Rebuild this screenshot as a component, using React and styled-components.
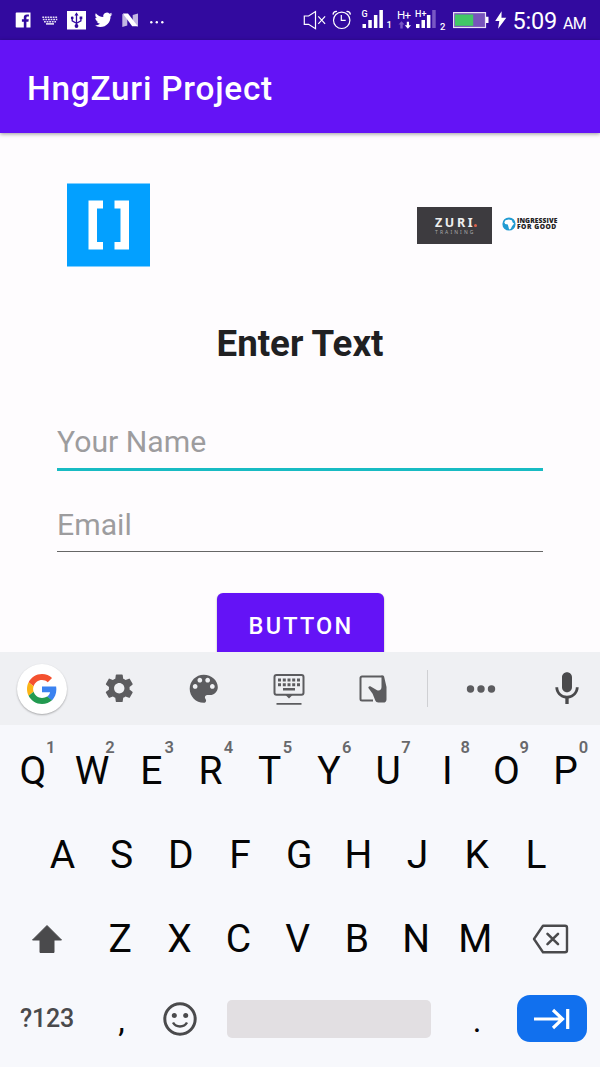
import React from 'react';
import styled, { createGlobalStyle } from 'styled-components';
import { MdSettings, MdMic } from 'react-icons/md';

const GlobalStyle = createGlobalStyle`
  *, *::before, *::after { box-sizing: border-box; }
  body { margin: 0; background: #fefcfe; font-family: Roboto, "Liberation Sans", sans-serif; }
  svg { display: block; flex: none; }
`;

const Screen = styled.div`
  width: 600px;
  height: 1067px;
  display: flex;
  flex-direction: column;
  overflow: hidden;
`;

/* ---------- status bar ---------- */

const StatusBar = styled.header`
  flex: none;
  height: 40px;
  display: flex;
  justify-content: space-between;
  background: #320a9f;
  color: #fff;
`;

const StatusClock = styled.div`
  display: flex;
  align-items: baseline;
  padding: 7px 14px 0 0;
  font-size: 23.5px;
  line-height: 28px;
  letter-spacing: -0.2px;
`;

const Meridiem = styled.span`
  margin-left: 6px;
  font-size: 16px;
  letter-spacing: -0.7px;
`;

const StatusGroup = styled.div`
  display: flex;
`;

const NotificationIcons = () => (
  <svg width="170" height="40" viewBox="0 0 170 40" fill="#fff">
    <path d="M16.5 12.5h14v15h-4.100v-5.700h2l.4-2.500h-2.400v-1.500c0-.8.3-1.200 1.300-1.200h1.200v-2.200h-1.900c-2.200 0-3.200 1.200-3.200 3.100v1.800h-1.900v2.500h1.900v5.700h-7.300a.8.8 0 0 1-.8-.8V13.300a.8.8 0 0 1 .8-.8z" />
    <g fill="none" stroke="#e4dcf6" strokeWidth="1.5" strokeDasharray="1.8 0.8">
      <path d="M42.300 17.200h15.500M42.800 19.500h14.500M44 21.700h12" />
    </g>
    <path d="M46 23.200h8v1.400h-8z" />
    <rect x="67" y="11" width="19" height="18.500" />
    <g stroke="#320a9f" strokeWidth="1.300" fill="none">
      <path d="M76.500 14v12M72.200 18v2.800l4.300 2.500 4.400-2.500V17.500" />
    </g>
    <g fill="#320a9f">
      <path d="M76.500 12.300l2 3.200h-4z" />
      <circle cx="76.500" cy="26" r="1.900" />
      <circle cx="72.200" cy="18" r="1.400" />
      <rect x="79.600" y="16.500" width="2.700" height="2.700" />
    </g>
    <path transform="translate(94.600 10.900) scale(.74)" d="M23.950 4.570a10 10 0 0 1-2.820.780 4.960 4.960 0 0 0 2.160-2.730c-.950.560-2 .960-3.130 1.190a4.920 4.920 0 0 0-8.380 4.480C7.690 8.100 4.070 6.130 1.640 3.160a4.820 4.820 0 0 0-.670 2.480c0 1.710.870 3.210 2.190 4.100a4.900 4.900 0 0 1-2.230-.620v.060a4.920 4.920 0 0 0 3.950 4.830 4.990 4.990 0 0 1-2.210.080 4.940 4.940 0 0 0 4.600 3.420A9.870 9.870 0 0 1 0 19.540a14 14 0 0 0 7.550 2.210c9.050 0 14-7.500 14-13.980 0-.210 0-.420-.020-.630a9.940 9.940 0 0 0 2.460-2.550z" />
    <path opacity=".7" d="M122.300 14l5 1.500v10l-5 1.500zM132.700 15l5.300-1.500v13l-5.300-1.500z" />
    <path d="M122.800 13.500h5.200l9.800 12.800h-5.600z" />
    <circle cx="151.300" cy="22.300" r="1.200" />
    <circle cx="156.800" cy="22.300" r="1.200" />
    <circle cx="162.300" cy="22.300" r="1.200" />
  </svg>
);

const SystemIcons = () => (
  <svg width="212" height="40" viewBox="300 0 212 40" fill="#fff">
    <g fill="none" stroke="#fff" strokeWidth="1.200">
      <path d="M304.300 16v8.300h4.300l6.900 4.400V11.500l-6.900 4.500zM318.300 16.300l6.800 7.600M325.100 16.300l-6.800 7.600" />
      <circle cx="341.700" cy="20.300" r="8.200" />
      <path d="M341.300 15v5.300h4.400M333 14.600c.2-2 2-3.300 4-3.100M350.400 14.600c-.2-2-2-3.300-4-3.100" />
    </g>
    <g fontFamily="Roboto, sans-serif" fontWeight="500">
      <text x="361.600" y="16.800" fontSize="9">G</text>
      <text x="386.600" y="28.200" fontSize="9.500">1</text>
      <text x="397" y="18.700" fontSize="11.500" fontWeight="400" textLength="14">H+</text>
      <text x="415" y="16.500" fontSize="9" textLength="11.500">H+</text>
      <text x="440" y="29.500" fontSize="9.500">2</text>
    </g>
    <path d="M362.500 24h3.500v4h-3.500zM368.300 20h3.500v8h-3.500zM373.900 15h3.500v13h-3.500zM379.400 10h3.500v18h-3.500z" />
    <path d="M416 24h3.500v4H416zM421.500 20h3.500v8h-3.500zM426.900 15h3.500v13h-3.500z" />
    <path fill="#7857c4" d="M432.200 10h3.500v18h-3.500zM400.300 28.500v-4h-1.800l3-3.200 3 3.200h-1.800v4z" />
    <path d="M406.800 21.800v3.400h-2l3.100 3.500 3.100-3.500h-2v-3.400z" />
    <rect x="453.600" y="12.600" width="31.900" height="14.900" fill="#7754bb" stroke="#e9e2f6" strokeWidth="1.200" />
    <path fill="#42c866" d="M455 14.500h18.200v11.300H455z" />
    <path d="M486 16.800h2.500V23H486zM501.600 11.200l-6.400 9.900h4.100l-1.200 7.600 8.200-11h-4.800z" />
  </svg>
);

/* ---------- app content ---------- */

const AppBar = styled.div`
  flex: none;
  height: 93px;
  padding: 1px 27px 0;
  display: flex;
  align-items: center;
  background: #6413f6;
  box-shadow: 0 1px 4px rgba(0, 0, 0, 0.4);
  z-index: 1;
`;

const Title = styled.h1`
  margin: 4px 0 0;
  color: #fff;
  font-size: 33.3px;
  font-weight: 500;
  line-height: 40px;
  letter-spacing: 0.8px;
  white-space: nowrap;
`;

const Content = styled.main`
  flex: none;
  height: 519px;
  padding: 50px 57px 0;
  display: flex;
  flex-direction: column;
  background: #fefcfe;
  overflow: hidden;
`;

const LogoRow = styled.div`
  flex: none;
  display: flex;
  align-items: center;
  height: 84px;
  margin: 0 -20px 0 10px;
`;

const ZuriBadge = styled.div`
  margin-left: auto;
  width: 75px;
  height: 37px;
  padding: 9px 0 0 18px;
  background: #3d3b3f;
  color: #eee;
  font-family: "Noto Sans", sans-serif;
`;

const ZuriName = styled.div`
  display: flex;
  align-items: baseline;
  font-size: 12.5px;
  font-weight: 700;
  line-height: 13px;
  letter-spacing: 2.6px;
`;

const ZuriDot = styled.span`
  width: 3px;
  height: 3px;
  margin-left: -1px;
  border-radius: 50%;
  background: #e0624a;
`;

const ZuriSub = styled.div`
  font-size: 5px;
  line-height: 6px;
  letter-spacing: 2.1px;
  color: #aaa;
`;

const Ingressive = styled.div`
  display: flex;
  align-items: center;
  gap: 1px;
  width: 61px;
  margin: 0 0 3px 10px;
  white-space: nowrap;
  font: 800 6.7px/5.700px "Open Sans", "Noto Sans", sans-serif;
  letter-spacing: 0.1px;
  color: #222;

  span { display: block; }
  span + span { letter-spacing: 0.5px; }
`;

const Heading = styled.h2`
  flex: none;
  margin: 55px 0 0;
  text-align: center;
  font-size: 36.700px;
  font-weight: 700;
  line-height: 44px;
  color: #202022;
`;

const Field = styled.input`
  flex: none;
  height: ${(p) => (p.$active ? 62 : 81)}px;
  margin-top: ${(p) => (p.$active ? 43 : 0)}px;
  padding: ${(p) => (p.$active ? '6px 0 0' : '27px 0 0')};
  border: 0;
  border-bottom: ${(p) => (p.$active ? '3px solid #18bbc3' : '1px solid #666')};
  border-radius: 0;
  outline: 0;
  background: transparent;
  font: 400 30.200px Roboto, sans-serif;
  &::placeholder { color: #9d9c9e; opacity: 1; }
`;

const Submit = styled.button`
  align-self: center;
  flex: none;
  margin-top: 41px;
  width: 167px;
  height: 66px;
  border: 0;
  border-radius: 6px;
  background: #6413f6;
  box-shadow: 0 1px 2px rgba(0, 0, 0, 0.35);
  color: #fff;
  font: 500 23.5px Roboto, sans-serif;
  letter-spacing: 2.2px;
  padding: 0 0 0 2px;
`;

/* ---------- keyboard ---------- */

const Keyboard = styled.section`
  flex: 1;
  display: flex;
  flex-direction: column;
  background: #f7f8fc;
  color: #050505;
`;

const Toolbar = styled.div`
  flex: none;
  height: 73px;
  display: flex;
  align-items: center;
  background: #eff0f3;
  color: #5c5c5f;
`;

const Tool = styled.div`
  flex: none;
  width: ${(p) => p.$w}px;
  display: flex;
  justify-content: center;
`;

const GoogleDisc = styled.div`
  width: 50px;
  height: 50px;
  margin-left: 7px;
  display: flex;
  align-items: center;
  justify-content: center;
  border-radius: 50%;
  background: #fff;
  box-shadow: 0 1px 2px rgba(0, 0, 0, 0.3);
`;

const Divider = styled.div`
  width: 1px;
  height: 37px;
  margin-left: 11px;
  background: #cfd0d3;
`;

const Keys = styled.div`
  padding-top: 3px;
`;

const KeyRow = styled.div`
  height: 84px;
  padding: 2px 1.500px 0 0;
  display: flex;
  justify-content: center;
  align-items: center;
`;

const Key = styled.div`
  position: relative;
  flex: none;
  width: ${(p) => p.$w || 59.2}px;
  display: flex;
  justify-content: center;
  font-size: 39px;
  line-height: 50px;
`;

const Hint = styled.sup`
  position: absolute;
  top: -8px;
  left: 42.500px;
  width: 10px;
  text-align: center;
  font-size: 16.500px;
  font-weight: 600;
  line-height: 20px;
  color: #68686b;
`;

const BottomRow = styled.div`
  height: 77px;
  display: flex;
  align-items: center;
`;

const Symbols = styled.div`
  width: 95px;
  padding-left: 20px;
  font-size: 25px;
  font-weight: 500;
  letter-spacing: -0.2px;
  color: #4a4a4c;
`;

const Punct = styled.div`
  width: ${(p) => p.$w}px;
  padding: 4px 0 0 ${(p) => p.$indent || 0}px;
  text-align: center;
  font-size: 33px;
  line-height: 40px;
`;

const Space = styled.div`
  width: 204px;
  height: 38px;
  margin-left: 15px;
  border-radius: 5px;
  background: #e2dfe2;
`;

const Next = styled.div`
  width: 70px;
  height: 47px;
  display: flex;
  align-items: center;
  justify-content: center;
  border-radius: 13px;
  background: #1170ee;
`;

const GoogleG = () => (
  <svg width="30" height="30" viewBox="0 0 48 48">
    <path fill="#f4512f" d="M24 9.500c3.540 0 6.710 1.220 9.210 3.600l6.850-6.850C35.900 2.380 30.470 0 24 0 14.620 0 6.510 5.380 2.560 13.220l7.980 6.190C12.430 13.720 17.740 9.500 24 9.500z" />
    <path fill="#3b82f0" d="M46.980 24.550c0-1.570-.150-3.090-.380-4.550H24v9.020h12.940c-.580 2.960-2.260 5.480-4.780 7.180l7.730 6c4.510-4.180 7.090-10.360 7.090-17.650z" />
    <path fill="#fbb416" d="M10.530 28.590c-.480-1.450-.760-2.990-.760-4.590s.270-3.140.760-4.590l-7.980-6.190C.920 16.460 0 20.120 0 24c0 3.880.920 7.540 2.560 10.780l7.970-6.190z" />
    <path fill="#229a50" d="M24 48c6.480 0 11.930-2.130 15.890-5.810l-7.730-6c-2.150 1.450-4.920 2.300-8.160 2.300-6.260 0-11.570-4.220-13.470-9.910l-7.980 6.190C6.510 42.620 14.620 48 24 48z" />
  </svg>
);

const PaletteIcon = () => (
  <svg width="37.500" height="37.500" viewBox="0 0 24 24" fill="currentColor">
    <path d="M12 3c-4.970 0-9 4.030-9 9s4.030 9 9 9c.83 0 1.500-.67 1.500-1.500 0-.39-.15-.74-.39-1.010-.23-.26-.38-.61-.38-.99 0-.83.67-1.500 1.500-1.500H16c2.760 0 5-2.240 5-5 0-4.420-4.030-8-9-8zm-5.500 9c-.83 0-1.500-.67-1.500-1.500S5.670 9 6.500 9 8 9.670 8 10.500 7.330 12 6.500 12zm3-4C8.670 8 8 7.330 8 6.500S8.670 5 9.500 5s1.500.67 1.500 1.500S10.330 8 9.500 8zm5 0c-.83 0-1.500-.67-1.500-1.500S13.670 5 14.500 5s1.500.67 1.500 1.500S15.330 8 14.500 8zm3 4c-.83 0-1.500-.67-1.500-1.500S16.670 9 17.500 9s1.500.67 1.500 1.500-.67 1.500-1.500 1.500z" />
  </svg>
);

const KeyboardIcon = () => (
  <svg width="32" height="32" viewBox="0 0 32 32" fill="currentColor">
    <rect x="1.500" y="2" width="29" height="19.700" rx="2" fill="none" stroke="currentColor" strokeWidth="2" />
    <path d="M5 5.500h3v3H5zM9.800 5.500h3v3h-3zM14.500 5.500h3v3h-3zM19.200 5.500h3v3h-3zM24 5.500h3v3h-3zM5 10.200h3v3H5zM9.800 10.200h3v3h-3zM14.500 10.200h3v3h-3zM19.200 10.200h3v3h-3zM24 10.200h3v3h-3zM10 15h12v2.500H10zM12.500 22h7L16 25.500zM3.500 30h25v1.800h-25z" />
  </svg>
);

const HandIcon = () => (
  <svg width="28" height="28" viewBox="0 0 28 28">
    <path fill="none" stroke="currentColor" strokeWidth="2" d="M14 25.500H3a1.500 1.500 0 0 1-1.500-1.500V3A1.500 1.500 0 0 1 3 1.500h20.500" />
    <path fill="currentColor" d="M22.500.5h1.200c.8 0 1.300.6 1.500 1.400l2.300 10v12.500c0 1.800-1.200 3.200-3.200 3.200h-5c-1.500 0-2.500-.7-3-2l-2.700-6.800-4-5.500c-.8-1 .4-2.600 1.700-2l6.800 4c2.700.7 4.400-.6 4.400-3.300z" />
  </svg>
);

const topKeys = 'QWERTYUIOP'.split('');

export default function App() {
  return (
    <Screen>
      <GlobalStyle />
      <StatusBar>
        <NotificationIcons />
        <StatusGroup>
          <SystemIcons />
          <StatusClock>5:09<Meridiem>AM</Meridiem></StatusClock>
        </StatusGroup>
      </StatusBar>
      <AppBar><Title>HngZuri Project</Title></AppBar>
      <Content>
        <LogoRow>
          <svg width="83" height="84" viewBox="0 0 83 84">
            <path fill="#03a0ff" d="M0 .5h83v83H0z" />
            <path fill="#fff" d="M21.500 17.500H36v8h-6V59h6v7.500H21.500zM47.500 17.500H62v49H47.500V59h6V25.500h-6z" />
          </svg>
          <ZuriBadge>
            <ZuriName>ZURI<ZuriDot /></ZuriName>
            <ZuriSub>TRAINING</ZuriSub>
          </ZuriBadge>
          <Ingressive>
            <svg width="14" height="14" viewBox="0 0 14 14">
              <circle cx="7" cy="7" r="6.600" fill="#219bd2" />
              <path fill="#fff" d="M3.500 3.200l3.300-.8 3 .8 1 2.600 1.400.8-2.200 2.600-1.200 2.600-1.700.6-.8-3.200-.5-1.600-2.600-.5-.9-1.800z" />
            </svg>
            <div><span>INGRESSIVE</span><span>FOR GOOD</span></div>
          </Ingressive>
        </LogoRow>
        <Heading>Enter Text</Heading>
        <Field $active placeholder="Your Name" />
        <Field placeholder="Email" />
        <Submit>BUTTON</Submit>
      </Content>
      <Keyboard>
        <Toolbar>
          <Tool $w={77}><GoogleDisc><GoogleG /></GoogleDisc></Tool>
          <Tool $w={84.700}><MdSettings size={34.500} /></Tool>
          <Tool $w={84.700}><PaletteIcon /></Tool>
          <Tool $w={84.700}><KeyboardIcon /></Tool>
          <Tool $w={84.700}><HandIcon /></Tool>
          <Divider />
          <Tool $w={107}>
            <svg width="30" height="10" viewBox="0 0 30 10" fill="currentColor">
              <circle cx="4.500" cy="5" r="3.700" /><circle cx="15" cy="5" r="3.700" /><circle cx="25.500" cy="5" r="3.700" />
            </svg>
          </Tool>
          <Tool $w={64}><MdMic size={40} color="#4a4a4c" /></Tool>
        </Toolbar>
        <Keys>
          <KeyRow>
            {topKeys.map((k, i) => <Key key={k}>{k}<Hint>{(i + 1) % 10}</Hint></Key>)}
          </KeyRow>
          <KeyRow>{'ASDFGHJKL'.split('').map((k) => <Key key={k}>{k}</Key>)}</KeyRow>
          <KeyRow>
            <Key $w={88}>
              <svg width="32" height="30" viewBox="0 0 32 30"><path fill="#4a4a4c" stroke="#4a4a4c" strokeLinejoin="round" d="M16 1.500L30.500 16H23v12.500H9V16H1.500z" /></svg>
            </Key>
            {'ZXCVBNM'.split('').map((k) => <Key key={k}>{k}</Key>)}
            <Key $w={91}>
              <svg width="37" height="30" viewBox="0 0 37 30" fill="none" stroke="#4a4a4c" strokeWidth="2.400" strokeLinejoin="round">
                <path d="M11 1.800h22a2 2 0 0 1 2 2v22.400a2 2 0 0 1-2 2H11L2 15z" />
                <path strokeLinecap="round" strokeWidth="2.600" d="M15.500 9.800L26 20.200M26 9.800L15.500 20.200" />
              </svg>
            </Key>
          </KeyRow>
          <BottomRow>
            <Symbols>?123</Symbols>
            <Punct $w={53}>,</Punct>
            <Tool $w={64}>
              <svg width="34" height="34" viewBox="0 0 34 34" fill="none" stroke="#4a4a4c" strokeWidth="3">
                <circle cx="17" cy="17" r="15.200" />
                <path strokeWidth="2.500" d="M10 20.500c3 5.200 11 5.200 14 0" />
                <g stroke="none" fill="#4a4a4c"><circle cx="11.300" cy="13.500" r="2.500" /><circle cx="22.700" cy="13.500" r="2.500" /></g>
              </svg>
            </Tool>
            <Space />
            <Punct $w={86} $indent={6}>.</Punct>
            <Next>
              <svg width="36" height="22" viewBox="0 0 36 22" fill="none" stroke="#fff" strokeWidth="3.200">
                <path d="M0 11h29M19 2l9.500 9-9.500 9M33.700 1v20" />
              </svg>
            </Next>
          </BottomRow>
        </Keys>
      </Keyboard>
    </Screen>
  );
}
